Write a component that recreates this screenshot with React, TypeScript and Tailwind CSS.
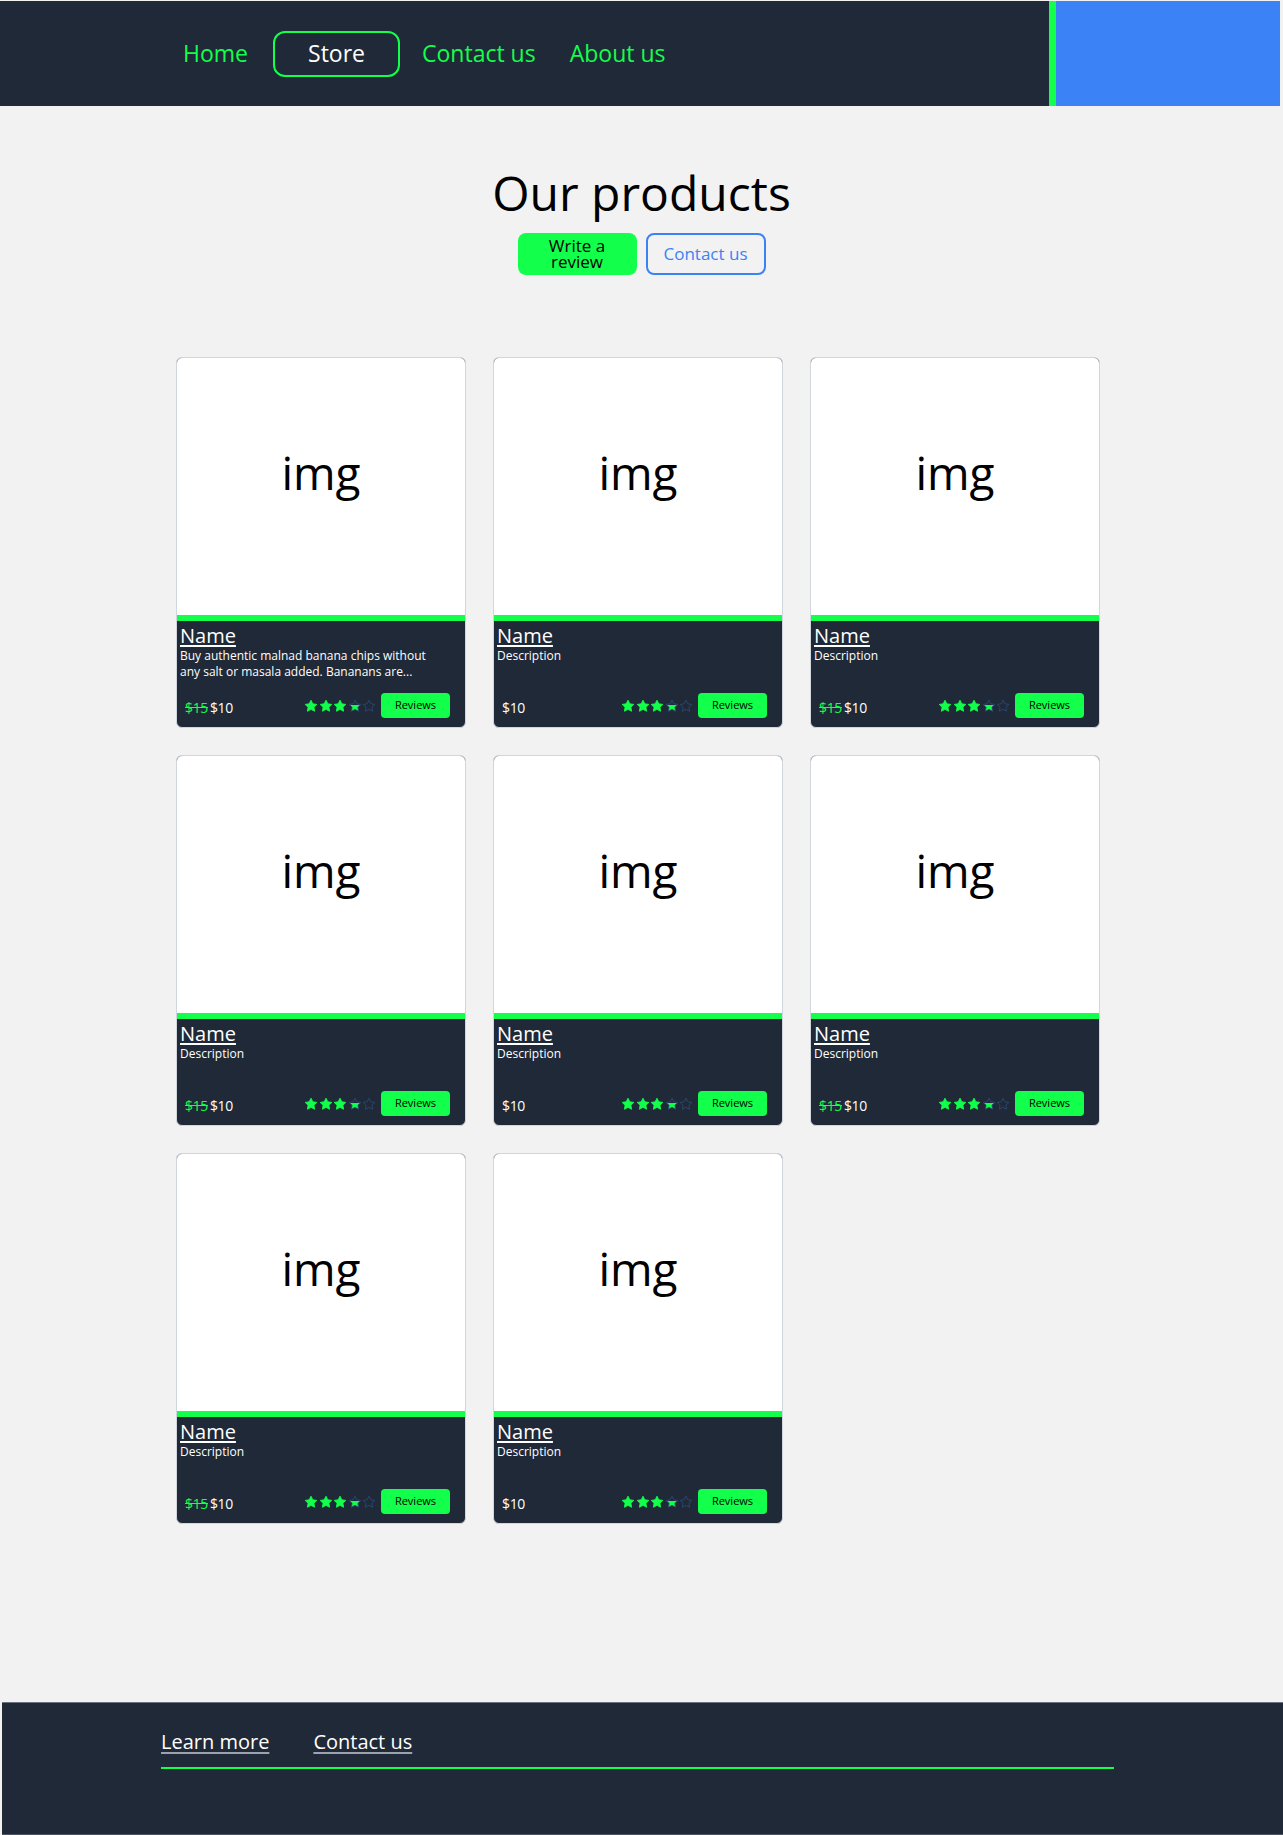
import React from 'react';

const GREEN = '#12ff4c';

type Product = {
  name: string;
  description: string;
  oldPrice?: string;
  price: string;
};

const products: Product[] = [
  {
    name: 'Name',
    description: 'Buy authentic malnad banana chips without any salt or masala added. Bananans are...',
    oldPrice: '$15',
    price: '$10',
  },
  { name: 'Name', description: 'Description', price: '$10' },
  { name: 'Name', description: 'Description', oldPrice: '$15', price: '$10' },
  { name: 'Name', description: 'Description', oldPrice: '$15', price: '$10' },
  { name: 'Name', description: 'Description', price: '$10' },
  { name: 'Name', description: 'Description', oldPrice: '$15', price: '$10' },
  { name: 'Name', description: 'Description', oldPrice: '$15', price: '$10' },
  { name: 'Name', description: 'Description', price: '$10' },
];

const STAR = 'M12 2l3.09 6.26L22 9.27l-5 4.87 1.18 6.88L12 17.77l-6.18 3.25L7 14.14 2 9.27l6.91-1.01L12 2z';

function Star({ fill, id }: { fill: 'full' | 'half' | 'empty'; id: string }) {
  return (
    <svg width="14" height="14" viewBox="0 0 24 24">
      <defs>
        <linearGradient id={id} x1="0" y1="0" x2="0" y2="1">
          <stop offset="48%" stopColor="transparent" />
          <stop offset="48%" stopColor={GREEN} />
        </linearGradient>
      </defs>
      <path
        d={STAR}
        fill={fill === 'full' ? GREEN : fill === 'half' ? `url(#${id})` : 'none'}
        stroke={fill === 'full' ? GREEN : '#2b4a73'}
        strokeWidth="1.5"
        strokeLinejoin="round"
      />
    </svg>
  );
}

function Rating({ idx }: { idx: number }) {
  return (
    <div className="flex items-center gap-[0.5px]">
      <Star fill="full" id={`s${idx}a`} />
      <Star fill="full" id={`s${idx}b`} />
      <Star fill="full" id={`s${idx}c`} />
      <Star fill="half" id={`s${idx}d`} />
      <Star fill="empty" id={`s${idx}e`} />
    </div>
  );
}

function ProductCard({ product, idx }: { product: Product; idx: number }) {
  return (
    <div className="flex h-[371px] w-[290px] flex-col overflow-hidden rounded-md border border-gray-300 bg-[#1f2937]">
      {/* image placeholder */}
      <div className="flex h-[263px] shrink-0 items-start justify-center border-b-[6px] border-[#12ff4c] bg-white pt-[91px]">
        <span className="text-[46px] leading-none text-black">img</span>
      </div>
      <div className="flex flex-1 flex-col px-[3px] pt-[3px]">
        <a href="#" className="self-start text-[20px] leading-[24px] text-white underline underline-offset-2">
          {product.name}
        </a>
        <p className="pr-[16px] text-[12px] leading-[16px] text-white">{product.description}</p>
        <div className="mt-auto mb-[9px] flex items-center justify-between pl-[5px] pr-[12px]">
          <div className="flex items-center gap-[2px] pt-[3px] text-[14px] tracking-tight">
            {product.oldPrice && <span className="text-[#12ff4c] line-through">{product.oldPrice}</span>}
            <span className="text-white">{product.price}</span>
          </div>
          <div className="flex items-center gap-[5px]">
            <Rating idx={idx} />
            <button className="h-[25px] w-[69px] rounded bg-[#12ff4c] text-[11px] text-black">Reviews</button>
          </div>
        </div>
      </div>
    </div>
  );
}

export default function App() {
  return (
    <div
      className="flex min-h-[1835px] w-full flex-col bg-[#f2f2f2] pt-px"
      style={{ fontFamily: '"Open Sans", "Noto Sans", sans-serif' }}
    >
      {/* header */}
      <header className="mr-[3px] flex h-[105px]">
        <nav className="flex flex-1 items-center bg-[#1f2937] pl-[183px] text-[23px]">
          <a href="#" className="text-[#12ff4c]">Home</a>
          <a
            href="#"
            className="ml-[25px] flex h-[46px] w-[127px] items-center justify-center rounded-xl border-2 border-[#12ff4c] text-white"
          >
            Store
          </a>
          <a href="#" className="ml-[22px] text-[#12ff4c]">Contact us</a>
          <a href="#" className="ml-[34px] text-[#12ff4c]">About us</a>
        </nav>
        <div className="w-[7px] bg-[#12ff4c]" />
        <div className="w-[224px] bg-[#3b82f6]" />
      </header>

      {/* title */}
      <section className="mt-[63px] flex flex-col items-center">
        <h1 className="text-[48px] leading-none text-black">Our products</h1>
        <div className="mt-[16px] flex gap-[9px]">
          <button className="flex h-[42px] w-[119px] flex-col items-center justify-center rounded-lg bg-[#12ff4c] text-[17px] leading-[16px] text-black">
            <span>Write a</span>
            <span>review</span>
          </button>
          <button className="h-[42px] w-[120px] rounded-lg border-2 border-[#3b82f6] text-[17px] text-[#3b82f6]">
            Contact us
          </button>
        </div>
      </section>

      {/* products */}
      <section className="ml-[176px] mt-[82px] grid w-[926px] grid-cols-[290px_290px_290px] gap-x-[27px] gap-y-[27px]">
        {products.map((p, i) => (
          <ProductCard key={i} product={p} idx={i} />
        ))}
      </section>

      {/* footer */}
      <footer className="ml-[2px] mt-auto h-[133px] border-y border-t-[#6b7280] border-b-[#4b5563] bg-[#1f2937] pl-[159px] pt-[24px]">
        <div className="flex gap-[44px] text-[20px] text-white">
          <a href="#" className="underline decoration-[#9ca3af] decoration-2 underline-offset-[3px]">Learn more</a>
          <a href="#" className="underline decoration-[#9ca3af] decoration-2 underline-offset-[3px]">Contact us</a>
        </div>
        <div className="mt-[10px] h-[2px] w-[953px] bg-[#12ff4c]" />
      </footer>
    </div>
  );
}
